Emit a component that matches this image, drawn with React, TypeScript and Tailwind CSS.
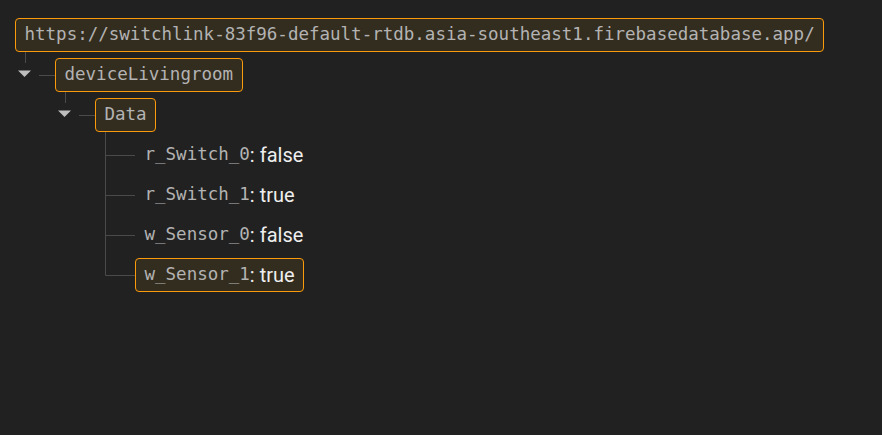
const LINE = '#4a4a4a'

type Leaf = { key: string; value: string; active?: boolean }

const leaves: Leaf[] = [
  { key: 'r_Switch_0', value: 'false' },
  { key: 'r_Switch_1', value: 'true' },
  { key: 'w_Sensor_0', value: 'false' },
  { key: 'w_Sensor_1', value: 'true', active: true },
]

function NodeBox({ active, children }: { active?: boolean; children: React.ReactNode }) {
  return (
    <div
      className={
        'flex h-[34px] items-center whitespace-nowrap rounded-[4px] border-[1.5px] px-[8.5px] ' +
        (active ? 'border-[#fb9a0a] bg-[#332d1f]' : 'border-transparent')
      }
    >
      {children}
    </div>
  )
}

function Key({ children }: { children: React.ReactNode }) {
  return (
    <span className="font-['DejaVu_Sans_Mono','Liberation_Mono',monospace] text-[17.5px] leading-none text-[#b3b3b3]">
      {children}
    </span>
  )
}

function BranchGutter() {
  return (
    <svg width="40" height="40" viewBox="0 0 40 40" className="shrink-0 overflow-visible">
      <line x1="10.5" y1="-3" x2="10.5" y2="8" stroke={LINE} strokeWidth="1" />
      <polygon points="3,15.5 16,15.5 9.5,22" fill="#bdbdbd" />
      <line x1="24" y1="20.5" x2="40" y2="20.5" stroke={LINE} strokeWidth="1" />
    </svg>
  )
}

function LeafGutter({ last }: { last: boolean }) {
  return (
    <svg width="40" height="40" viewBox="0 0 40 40" className="shrink-0 overflow-visible">
      <line x1="10.5" y1="-3" x2="10.5" y2={last ? 20.5 : 40} stroke={LINE} strokeWidth="1" />
      <line x1="10.5" y1="20.5" x2="40" y2="20.5" stroke={LINE} strokeWidth="1" />
    </svg>
  )
}

export default function App() {
  return (
    <div className="h-[435px] w-[882px] overflow-hidden bg-[#212121] pl-[15px] pt-[15px]">
      <div className="flex h-[40px] items-center">
        <NodeBox active>
          <Key>https://switchlink-83f96-default-rtdb.asia-southeast1.firebasedatabase.app/</Key>
        </NodeBox>
      </div>

      <div className="flex h-[40px] items-center">
        <BranchGutter />
        <NodeBox active>
          <Key>deviceLivingroom</Key>
        </NodeBox>
      </div>

      <div className="flex h-[40px] items-center pl-[40px]">
        <BranchGutter />
        <NodeBox active>
          <Key>Data</Key>
        </NodeBox>
      </div>

      <div className="flex flex-col pl-[80px]">
        {leaves.map((leaf, i) => (
          <div key={leaf.key} className="flex h-[40px] items-center">
            <LeafGutter last={i === leaves.length - 1} />
            <NodeBox active={leaf.active}>
              <Key>{leaf.key}</Key>
              <span className="mr-[5px] font-['Roboto',sans-serif] text-[20px] leading-none text-[#eeeeee]">:</span>
              <span className="font-['Roboto',sans-serif] text-[20px] leading-none text-[#eeeeee]">
                {leaf.value}
              </span>
            </NodeBox>
          </div>
        ))}
      </div>
    </div>
  )
}
